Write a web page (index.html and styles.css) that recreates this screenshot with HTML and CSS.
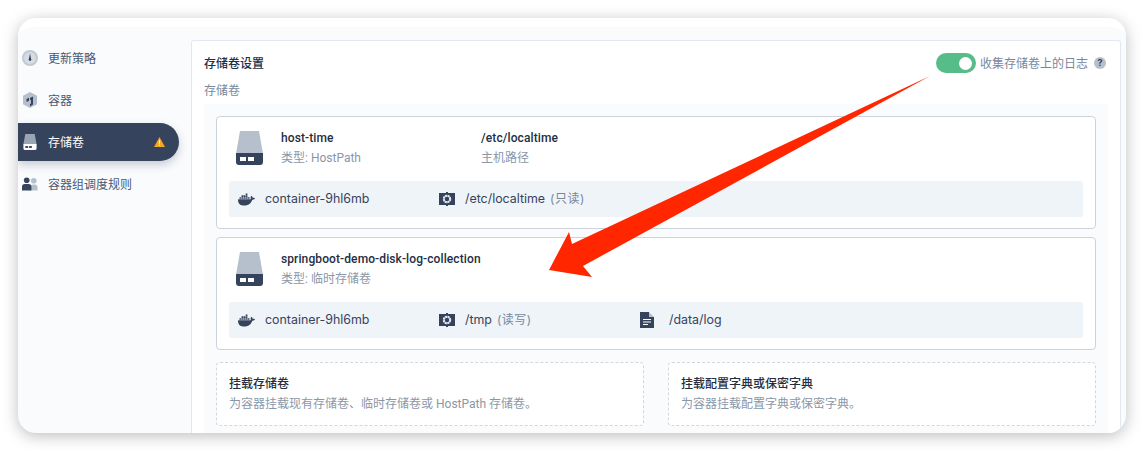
FILE: index.html
```html
<!DOCTYPE html>
<html lang="zh-CN">
<head>
    <meta charset="UTF-8">
    <title>存储卷设置</title>
    <link rel="stylesheet" href="styles.css">
</head>
<body>
<svg class="defs" width="0" height="0">
    <symbol id="disk" viewBox="0 0 27 34">
        <path d="M4 0h19l4 23H0z" fill="#b5c0cc"/>
        <path d="M0 22h27v9a3 3 0 0 1-3 3H3a3 3 0 0 1-3-3z" fill="#36435c"/>
        <rect x="4" y="26" width="6" height="4" fill="#fff"/>
        <rect x="12" y="26" width="6" height="4" fill="#fff"/>
    </symbol>
    <symbol id="docker" viewBox="0 0 24 24">
        <path fill="#36435c" d="M13.983 11.078h2.119a.186.186 0 00.186-.185V9.006a.186.186 0 00-.186-.186h-2.119a.185.185 0 00-.185.185v1.888c0 .102.083.185.185.185m-2.954-5.43h2.118a.186.186 0 00.186-.186V3.574a.186.186 0 00-.186-.185h-2.118a.185.185 0 00-.185.185v1.888c0 .102.082.185.185.186m0 2.716h2.118a.187.187 0 00.186-.186V6.29a.186.186 0 00-.186-.185h-2.118a.185.185 0 00-.185.185v1.887c0 .102.082.185.185.186m-2.93 0h2.12a.186.186 0 00.184-.186V6.29a.185.185 0 00-.185-.185H8.1a.185.185 0 00-.185.185v1.887c0 .102.083.185.185.186m-2.964 0h2.119a.186.186 0 00.185-.186V6.29a.185.185 0 00-.185-.185H5.136a.186.186 0 00-.186.185v1.887c0 .102.084.185.186.186m5.893 2.715h2.118a.186.186 0 00.186-.185V9.006a.186.186 0 00-.186-.186h-2.118a.185.185 0 00-.185.185v1.888c0 .102.082.185.185.185m-2.93 0h2.12a.185.185 0 00.184-.185V9.006a.185.185 0 00-.184-.186h-2.12a.185.185 0 00-.184.185v1.888c0 .102.083.185.185.185m-2.964 0h2.119a.185.185 0 00.185-.185V9.006a.185.185 0 00-.185-.186h-2.12a.186.186 0 00-.185.186v1.887c0 .102.084.185.186.185m-2.92 0h2.12a.185.185 0 00.184-.185V9.006a.185.185 0 00-.184-.186h-2.12a.185.185 0 00-.184.186v1.887c0 .102.082.185.185.185M23.763 9.89c-.065-.051-.672-.51-1.954-.51-.338.001-.676.03-1.01.087-.248-1.7-1.653-2.53-1.716-2.566l-.344-.199-.226.327c-.284.438-.49.922-.612 1.43-.23.97-.09 1.882.403 2.661-.595.332-1.55.413-1.744.42H.751a.751.751 0 00-.75.748 11.376 11.376 0 00.692 4.062c.545 1.428 1.355 2.48 2.41 3.124 1.18.723 3.1 1.137 5.275 1.137.983.003 1.963-.086 2.93-.266a12.248 12.248 0 003.823-1.389c.98-.567 1.86-1.288 2.61-2.136 1.252-1.418 1.998-2.997 2.553-4.4h.221c1.372 0 2.215-.549 2.68-1.009.309-.293.55-.65.707-1.046l.098-.288Z"/>
    </symbol>
    <symbol id="mount" viewBox="0 0 16 14">
        <path d="M0 1h7V0h2v1h7v12H9v1H7v-1H0z" fill="#36435c"/>
        <circle cx="8" cy="7" r="3.2" fill="none" stroke="#fff" stroke-width="2" stroke-dasharray="2 .55"/>
        <circle cx="8" cy="7" r="3.4" fill="none" stroke="#b5c0cc" stroke-width=".6"/>
    </symbol>
    <symbol id="file" viewBox="0 0 14 16">
        <path d="M0 0h9v5h5v11H0z" fill="#36435c"/>
        <path d="M9 0l5 5H9z" fill="#b5c0cc"/>
        <path d="M3 7.5h8M3 10h8M3 12.5h5" stroke="#fff" stroke-width="1.1"/>
    </symbol>
</svg>

<div class="window">
    <div class="sidebar">
        <div class="nav-item">
            <svg class="nav-icon" viewBox="0 0 16 16">
                <circle cx="8" cy="8" r="8" fill="#c1c9d1"/>
                <circle cx="8" cy="8" r="6" fill="#d5dce3"/>
                <path d="M8 3.500l1.200 6h-2.400z" fill="#36435c"/>
                <circle cx="8" cy="9.600" r="1.300" fill="#36435c"/>
            </svg>
            <span>更新策略</span>
        </div>
        <div class="nav-item">
            <svg class="nav-icon" viewBox="0 0 16 16">
                <path d="M8 0l7 3.800v8.400L8 16l-7-3.800V3.800z" fill="#b5c0cc"/>
                <path d="M8 6l3-1.500v8L8 14.400V12l1-.6V7.600L8 8.200zM4.500 7L7 5.800v3L4.500 10z" fill="#36435c"/>
            </svg>
            <span>容器</span>
        </div>
        <div class="nav-item active">
            <svg class="nav-icon" viewBox="0 0 14 17">
                <path d="M2 0h10l2 11H0z" fill="#9aa5b4"/>
                <path d="M0 10.500h14V15.500a1.500 1.500 0 0 1-1.500 1.500h-11A1.500 1.500 0 0 1 0 15.500z" fill="#fff"/>
                <rect x="2" y="12.800" width="3" height="2" fill="#36435c"/>
                <rect x="6" y="12.800" width="3" height="2" fill="#36435c"/>
            </svg>
            <span>存储卷</span>
            <svg class="warn" viewBox="0 0 12 11">
                <path d="M6 0l6 11H0z" fill="#f5a623"/>
                <path d="M5.400 3.500h1.200v4H5.400zM5.400 8.300h1.200v1.200H5.400z" fill="#fff6e0"/>
            </svg>
        </div>
        <div class="nav-item">
            <svg class="nav-icon" viewBox="0 0 17 14">
                <circle cx="12.500" cy="3.500" r="3" fill="#b5c0cc"/>
                <path d="M9 14V10.500a3 3 0 0 1 3-3h1.500a3 3 0 0 1 3 3V14z" fill="#b5c0cc"/>
                <circle cx="5" cy="3" r="3" fill="#36435c"/>
                <path d="M0 14V10a3 3 0 0 1 3-3h4a3 3 0 0 1 3 3v4z" fill="#36435c"/>
            </svg>
            <span>容器组调度规则</span>
        </div>
    </div>

    <div class="panel">
        <div class="panel-head">
            <div class="panel-title">存储卷设置</div>
            <div class="log-switch">
                <span class="toggle"><i></i></span>
                <span class="log-text">收集存储卷上的日志</span>
                <span class="help">?</span>
            </div>
        </div>
        <div class="section-label">存储卷</div>
        <div class="volumes">
            <div class="card">
                <div class="card-top">
                    <svg class="disk"><use href="#disk"/></svg>
                    <div class="cell">
                        <div class="name">host-time</div>
                        <div class="sub">类型: HostPath</div>
                    </div>
                    <div class="cell">
                        <div class="name">/etc/localtime</div>
                        <div class="sub">主机路径</div>
                    </div>
                </div>
                <div class="mount-bar">
                    <div class="mount-col">
                        <svg class="ic-docker"><use href="#docker"/></svg>container-9hl6mb
                    </div>
                    <div class="mount-col">
                        <svg class="ic-mount"><use href="#mount"/></svg>/etc/localtime<em>(只读)</em>
                    </div>
                </div>
            </div>
            <div class="card">
                <div class="card-top">
                    <svg class="disk"><use href="#disk"/></svg>
                    <div class="cell">
                        <div class="name">springboot-demo-disk-log-collection</div>
                        <div class="sub">类型: 临时存储卷</div>
                    </div>
                </div>
                <div class="mount-bar">
                    <div class="mount-col">
                        <svg class="ic-docker"><use href="#docker"/></svg>container-9hl6mb
                    </div>
                    <div class="mount-col">
                        <svg class="ic-mount"><use href="#mount"/></svg>/tmp<em>(读写)</em>
                    </div>
                    <div class="mount-col">
                        <svg class="ic-file"><use href="#file"/></svg>/data/log
                    </div>
                </div>
            </div>
            <div class="add-row">
                <div class="add-box">
                    <div class="name">挂载存储卷</div>
                    <div class="sub">为容器挂载现有存储卷、临时存储卷或 HostPath 存储卷。</div>
                </div>
                <div class="add-box">
                    <div class="name">挂载配置字典或保密字典</div>
                    <div class="sub">为容器挂载配置字典或保密字典。</div>
                </div>
            </div>
        </div>
    </div>

    <svg class="arrow" viewBox="0 0 1108 415" width="1108" height="415">
        <path d="M912 58L565 248L574 259L531 252L551 214L554 226Z" fill="#ff2600"/>
    </svg>
</div>
</body>
</html>
```

FILE: styles.css
```css
html,body{
    margin: 0;
    padding: 0;
    background-color: #fff;
}
body{
    padding: 18px;
    font-family: "Inter","Noto Sans CJK SC",sans-serif;
    font-size: 12px;
    line-height: 20px;
    color: #36435c;
}
.defs{
    position: absolute;
}
.window{
    position: relative;
    display: flex;
    width: 1108px;
    height: 415px;
    box-sizing: border-box;
    border-top: 9px solid #fff;
    border-radius: 18px;
    background-color: #f9fbfd;
    box-shadow: 0 3px 16px rgba(0,0,0,.26);
    overflow: hidden;
}
.sidebar{
    width: 173px;
    flex-shrink: 0;
    padding-top: 12px;
}
.nav-item{
    display: flex;
    align-items: center;
    height: 38px;
    margin-bottom: 4px;
    padding-left: 4px;
    color: #4a5974;
}
.nav-item span{
    padding-top: 2px;
}
.nav-icon{
    width: 16px;
    height: 16px;
    margin-right: 10px;
}
.nav-item.active{
    width: 161px;
    box-sizing: border-box;
    border-radius: 0 19px 19px 0;
    background-color: #36435c;
    color: #fff;
    box-shadow: 0 4px 8px rgba(54,67,92,.25);
}
.warn{
    width: 11px;
    height: 10px;
    margin-left: auto;
    margin-right: 14px;
}
.panel{
    display: flex;
    flex-direction: column;
    width: 930px;
    margin-top: 13px;
    padding: 0 12px;
    box-sizing: border-box;
    border: 1px solid #e3e8ef;
    border-bottom: 0;
    border-radius: 3px 3px 0 0;
    background-color: #fff;
}
.panel-head{
    display: flex;
    justify-content: space-between;
    align-items: center;
    margin-top: 12px;
    height: 20px;
}
.panel-title{
    padding-top: 1px;
    font-weight: 500;
    color: #242e42;
}
.log-switch{
    display: flex;
    align-items: center;
    color: #79879c;
    padding-right: 2px;
}
.log-text{
    padding-top: 2px;
}
.toggle{
    display: flex;
    justify-content: flex-end;
    align-items: center;
    width: 40px;
    height: 20px;
    margin-right: 4px;
    padding: 0 4px;
    box-sizing: border-box;
    border-radius: 10px;
    background-color: #55bc8a;
}
.toggle i{
    width: 13px;
    height: 13px;
    border-radius: 50%;
    background-color: #fff;
}
.help{
    width: 12px;
    height: 12px;
    margin-left: 6px;
    border-radius: 50%;
    background-color: #b5c0cc;
    color: #36435c;
    font-size: 9px;
    font-weight: 700;
    line-height: 12px;
    text-align: center;
}
.section-label{
    margin-top: 8px;
    color: #79879c;
}
.volumes{
    flex: 1;
    margin-top: 3px;
    padding: 12px 12px 0;
    background-color: #f9fbfd;
}
.card{
    margin-bottom: 8px;
    padding: 0 12px 11px;
    border: 1px solid #ccd3db;
    border-radius: 4px;
    background-color: #fff;
}
.card-top{
    display: flex;
    align-items: center;
    height: 64px;
    padding: 0 0 2px 7px;
    box-sizing: border-box;
}
.disk{
    width: 27px;
    height: 34px;
    margin-right: 18px;
}
.cell{
    width: 200px;
}
.name{
    font-family: "Roboto","Noto Sans CJK SC",sans-serif;
    font-weight: 500;
    letter-spacing: .1px;
    color: #242e42;
    white-space: nowrap;
}
.add-box .name{
    letter-spacing: 0;
}
.sub{
    font-family: "Roboto","Noto Sans CJK SC",sans-serif;
    color: #8a97a9;
    white-space: nowrap;
}
.mount-bar{
    display: flex;
    align-items: center;
    height: 36px;
    padding-left: 9px;
    border-radius: 3px;
    background-color: #eff4f9;
}
.mount-col{
    display: flex;
    align-items: center;
    width: 201px;
    font-size: 12.4px;
    white-space: nowrap;
}
.mount-col em{
    margin-left: 5px;
    font-size: 12px;
    font-style: normal;
    letter-spacing: .5px;
    color: #79879c;
}
.ic-docker{
    width: 17px;
    height: 17px;
    margin-right: 10px;
}
.ic-mount{
    width: 16px;
    height: 14px;
    margin-right: 10px;
}
.ic-file{
    width: 14px;
    height: 16px;
    margin-right: 15px;
}
.add-row{
    display: flex;
    gap: 24px;
    margin-top: 12px;
}
.add-box{
    flex: 1;
    height: 64px;
    padding: 11px 12px 0;
    box-sizing: border-box;
    border: 1px dashed #d1d7df;
    border-radius: 4px;
    background-color: #fff;
}
.arrow{
    position: absolute;
    left: 0;
    top: -9px;
    pointer-events: none;
}
```
